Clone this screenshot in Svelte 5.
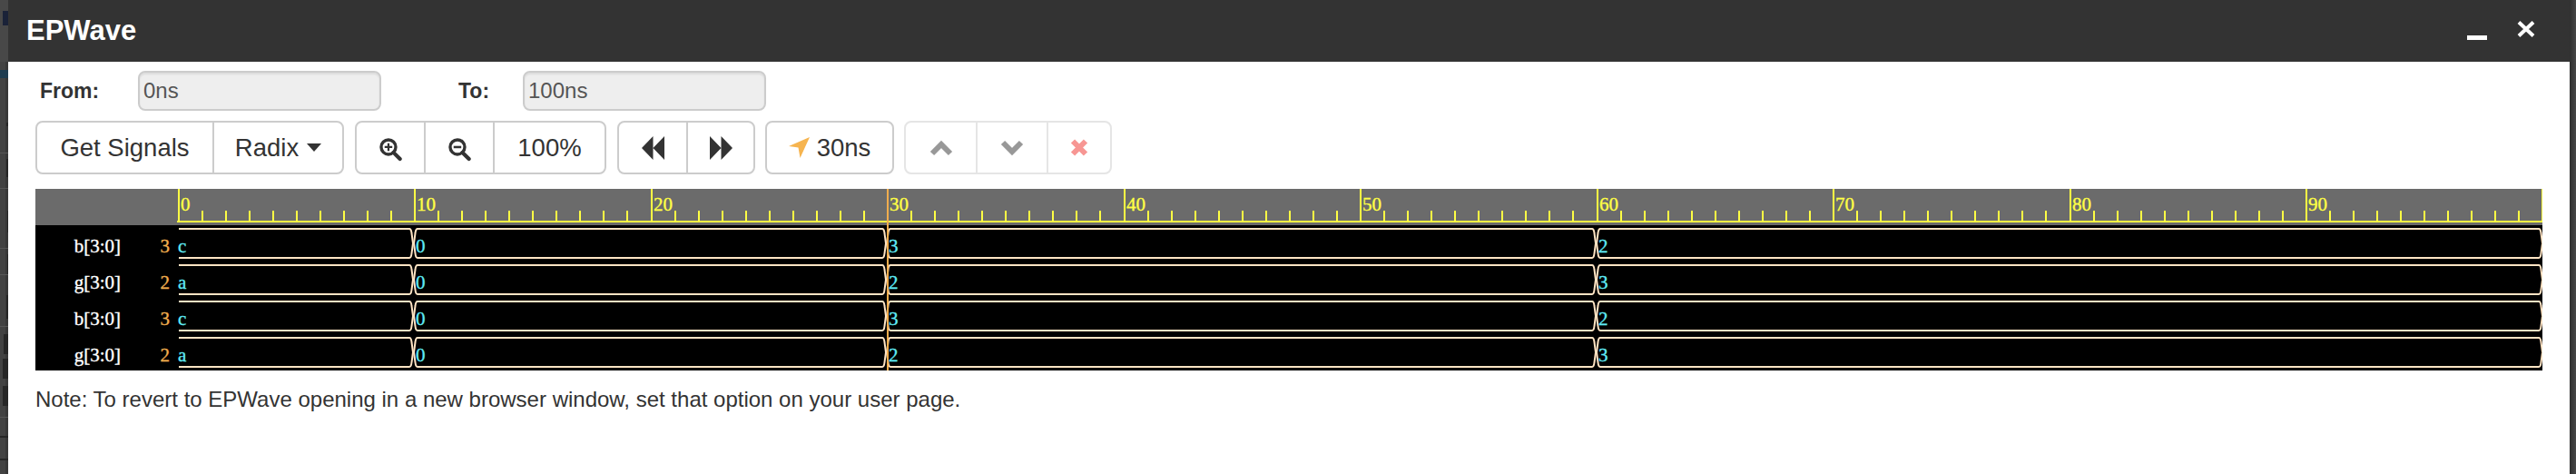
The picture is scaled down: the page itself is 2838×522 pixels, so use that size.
<script lang="ts">
  const rows = [
    { name: 'b[3:0]', cur: '3', vals: ['c', '0', '3', '2'], y: 252 },
    { name: 'g[3:0]', cur: '2', vals: ['a', '0', '2', '3'], y: 292 },
    { name: 'b[3:0]', cur: '3', vals: ['c', '0', '3', '2'], y: 332 },
    { name: 'g[3:0]', cur: '2', vals: ['a', '0', '2', '3'], y: 372 }
  ];

  const X0 = 195.5;
  const STEP = 26.05;
  const RIGHT = 2801;
  const ticks = Array.from({ length: 100 }, (_, i) => i);
  const xAt = (ns: number) => Math.round(X0 + ns * STEP);
  const edges = [10, 30, 60].map((ns) => xAt(ns) - 1);

  // one bus segment: the left end is flat at the start, the rest pinch in at the transitions
  function segment(y: number, from: number | null, to: number | null) {
    const mid = y + 16;
    const bot = y + 32;
    const l = from === null ? 197 : from + 5;
    const r = to === null ? RIGHT - 4 : to - 4;
    const rx = to === null ? RIGHT : to;
    let d = `M${l} ${y}H${r}Q${r + 2} ${y} ${r + 2.5} ${y + 5}L${rx} ${mid}L${r + 2.5} ${bot - 5}Q${r + 2} ${bot} ${r} ${bot}H${l}`;
    if (from !== null) {
      d += `Q${l - 2} ${bot} ${l - 2.5} ${bot - 5}L${from + 1} ${mid}L${l - 2.5} ${y + 5}Q${l - 2} ${y} ${l} ${y}`;
    }
    return d;
  }

  function spans() {
    const pts = [null, ...edges, null];
    return pts.slice(0, -1).map((p, i) => [p, pts[i + 1]] as const);
  }
</script>

<div class="page">
  <svg class="backdrop left" width="9" height="522" aria-hidden="true">
    <rect width="9" height="522" fill="#424242" />
    <rect x="6" y="0" width="3" height="522" fill="#383838" />
    <rect y="0" width="9" height="68" fill="#484848" />
    <rect x="3" y="12" width="6" height="16" fill="#1a2238" />
    <rect y="77" width="9" height="9" fill="#1f3c50" />
    <g fill="#565656">
      <rect y="168" width="9" height="1" />
      <rect y="207" width="9" height="1" />
      <rect y="273" width="9" height="1" />
      <rect y="302" width="9" height="1" />
      <rect y="359" width="9" height="1" />
      <rect y="459" width="9" height="1" />
    </g>
    <g fill="#262626">
      <rect x="7" y="135" width="2" height="4" />
      <rect x="7" y="175" width="2" height="20" />
      <rect x="8" y="232" width="1" height="24" />
      <rect x="8" y="280" width="1" height="22" />
      <rect x="7" y="325" width="2" height="26" />
      <rect x="4" y="368" width="5" height="22" />
      <rect x="3" y="395" width="6" height="22" />
      <rect x="3" y="425" width="6" height="22" />
      <rect y="480" width="9" height="2" />
      <rect y="505" width="9" height="2" />
    </g>
  </svg>

  <div class="win">
    <header class="titlebar">
      <span class="title">EPWave</span>
      <svg class="min" width="22" height="5" aria-hidden="true"><rect width="22" height="5" fill="#fff" /></svg>
      <svg class="close" width="20" height="18" viewBox="0 0 20 18" aria-hidden="true">
        <path d="M2 1.5 18 16.5M18 1.5 2 16.5" stroke="#fff" stroke-width="4" />
      </svg>
    </header>

    <div class="range">
      <label class="from" for="from">From:</label>
      <input id="from" class="field" value="0ns" readonly />
      <label class="to" for="to">To:</label>
      <input id="to" class="field" value="100ns" readonly />
    </div>

    <div class="toolbar">
      <div class="group g1">
        <button class="btn">Get Signals</button>
        <button class="btn">Radix<span class="caret"></span></button>
      </div>

      <div class="group g2">
        <button class="btn icon" aria-label="Zoom in">
          <svg class="mag" width="27" height="27" viewBox="0 0 32 32">
            <circle cx="13" cy="13" r="9.5" fill="none" stroke="#333" stroke-width="4" />
            <path d="M19.5 20 28 28.5" stroke="#333" stroke-width="5" stroke-linecap="round" />
            <path d="M8 13h10M13 8v10" stroke="#333" stroke-width="2.6" />
          </svg>
        </button>
        <button class="btn icon" aria-label="Zoom out">
          <svg class="mag" width="27" height="27" viewBox="0 0 32 32">
            <circle cx="13" cy="13" r="9.5" fill="none" stroke="#333" stroke-width="4" />
            <path d="M19.5 20 28 28.5" stroke="#333" stroke-width="5" stroke-linecap="round" />
            <path d="M8 13h10" stroke="#333" stroke-width="3" />
          </svg>
        </button>
        <button class="btn grow">100%</button>
      </div>

      <div class="group g3">
        <button class="btn icon" aria-label="Previous">
          <svg width="25" height="26" viewBox="0 0 25 26"><path d="M12.5 0V26L0 13ZM25 0V26L12.5 13Z" fill="#333" /></svg>
        </button>
        <button class="btn icon" aria-label="Next">
          <svg width="25" height="26" viewBox="0 0 25 26"><path d="M0 0V26L12.5 13ZM12.5 0V26L25 13Z" fill="#333" /></svg>
        </button>
      </div>

      <div class="group g4">
        <button class="btn cursor">
          <svg width="23" height="23" viewBox="0 0 23 23"><path d="M23 0 12.5 23 10.5 11.5 0 10Z" fill="#f6b44f" /></svg>
          30ns
        </button>
      </div>

      <div class="group g5">
        <button class="btn icon" aria-label="Move up">
          <svg width="26" height="18" viewBox="0 0 26 18"><path d="M3 15 13 5 23 15" fill="none" stroke="#333" stroke-width="6" /></svg>
        </button>
        <button class="btn icon" aria-label="Move down">
          <svg width="26" height="18" viewBox="0 0 26 18"><path d="M3 3 13 13 23 3" fill="none" stroke="#333" stroke-width="6" /></svg>
        </button>
        <button class="btn icon" aria-label="Remove">
          <svg width="20" height="19" viewBox="0 0 20 19"><path d="M3 2.5 17 16.5M17 2.5 3 16.5" stroke="#f0302a" stroke-width="6" /></svg>
        </button>
      </div>
    </div>

    <svg class="wave" width="2762" height="200" viewBox="39 208 2762 200" role="img" aria-label="Waveform">
      <rect x="39" y="208" width="2762" height="200" fill="#000" />
      <rect x="39" y="208" width="2762" height="40" fill="#6b6b6b" />

      <rect x="195" y="243" width="2606" height="2" fill="#ffff44" />
      {#each ticks as t}
        {#if t % 10 === 0}
          <rect x={xAt(t)} y="208" width="2" height="36" fill="#ffff44" />
          <text class="ruler" x={xAt(t) + 3} y="232">{t}</text>
        {:else}
          <rect x={xAt(t)} y="232" width="2" height="12" fill="#ffff44" />
        {/if}
      {/each}
      <rect x="2800" y="208" width="1" height="36" fill="#ffff44" />

      {#each rows as row}
        <text class="sig" x="133" y={row.y + 26}>{row.name}</text>
        <text class="cur" x="187" y={row.y + 26}>{row.cur}</text>
        {#each spans() as [from, to], i}
          <path class="bus" d={segment(row.y, from, to)} />
          <text class="val" x={from === null ? 196 : from + 3} y={row.y + 26}>{row.vals[i]}</text>
        {/each}
      {/each}

      <rect x={xAt(30)} y="208" width="2" height="200" fill="#f0ad4e" />
    </svg>

    <p class="note">Note: To revert to EPWave opening in a new browser window, set that option on your user page.</p>
  </div>

  <div class="backdrop right"></div>
</div>

<style>
  :global(body) {
    margin: 0;
    background: #fff;
  }

  .page {
    display: flex;
    height: 522px;
    overflow: hidden;
    font-family: 'Liberation Sans', Arial, sans-serif;
    color: #333;
  }

  .backdrop {
    flex: none;
    display: block;
  }

  .backdrop.right {
    width: 7px;
    background: linear-gradient(90deg, #2f2f2f, #474747);
  }

  .win {
    flex: 1;
    min-width: 0;
    background: #fff;
  }

  .titlebar {
    display: flex;
    align-items: center;
    height: 68px;
    padding: 0 38px 0 20px;
    background: #333;
    color: #fff;
  }

  .title {
    flex: 1;
    font-size: 31px;
    font-weight: 700;
  }

  .min {
    margin-top: 15px;
  }

  .close {
    margin: -4px 0 0 33px;
  }

  .range {
    display: flex;
    align-items: center;
    padding: 10px 0 0 35px;
  }

  .range label {
    font-size: 23px;
    font-weight: 700;
  }

  .from {
    width: 108px;
  }

  .to {
    width: 71px;
    margin-left: 85px;
  }

  .field {
    box-sizing: border-box;
    width: 268px;
    height: 44px;
    padding: 0 4px;
    border: 2px solid #ccc;
    border-radius: 8px;
    background: #eee;
    box-shadow: inset 0 2px 2px rgba(0, 0, 0, 0.075);
    font: 24px 'Liberation Sans', Arial, sans-serif;
    color: #555;
    outline: none;
  }

  .toolbar {
    display: flex;
    gap: 12px;
    margin: 11px 0 0 30px;
  }

  .group {
    box-sizing: border-box;
    display: flex;
    height: 59px;
    border: 2px solid #ccc;
    border-radius: 8px;
    background: #fff;
  }

  .g1 { width: 340px; }
  .g2 { width: 277px; }
  .g3 { width: 152px; }
  .g4 { width: 142px; margin-left: -1px; }
  .g5 { width: 229px; margin-left: -1px; opacity: 0.5; }

  .btn {
    display: flex;
    align-items: center;
    justify-content: center;
    flex: 1 1 auto;
    padding: 0;
    border: 0;
    border-left: 2px solid #ccc;
    background: none;
    font: 27.5px 'Liberation Sans', Arial, sans-serif;
    color: #333;
  }

  .btn:first-child {
    border-left: 0;
  }

  .g1 .btn:first-child { width: 193px; flex: none; }
  .g2 .icon { width: 76px; flex: none; }
  .g2 .icon:first-child { width: 74px; }
  .g3 .btn { width: 74px; flex: none; }
  .g5 .icon { width: 78px; flex: none; }
  .g5 .icon:first-child { width: 77px; }
  .g5 .icon:last-child { flex: 1; width: auto; }

  .mag {
    margin-top: 3px;
  }

  .cursor {
    gap: 8px;
  }

  .caret {
    width: 0;
    height: 0;
    margin-left: 9px;
    border-top: 9px solid #333;
    border-left: 8px solid transparent;
    border-right: 8px solid transparent;
  }

  .wave {
    display: block;
    margin: 16px 0 0 30px;
  }

  .wave text {
    font-family: 'Liberation Serif', 'Times New Roman', serif;
    font-size: 21px;
    stroke-width: 0.35px;
  }

  .ruler {
    fill: #ffff44;
    stroke: #ffff44;
  }

  .sig {
    fill: #fff;
    stroke: #fff;
    text-anchor: end;
  }

  .cur {
    fill: #f0ad4e;
    stroke: #f0ad4e;
    text-anchor: end;
  }

  .val {
    fill: #5feaf5;
    stroke: #5feaf5;
  }

  .bus {
    fill: none;
    stroke: #ffe4c4;
    stroke-width: 2;
  }

  .note {
    margin: 17px 0 0 30px;
    font-size: 24px;
    line-height: 30px;
    color: #333;
  }
</style>
